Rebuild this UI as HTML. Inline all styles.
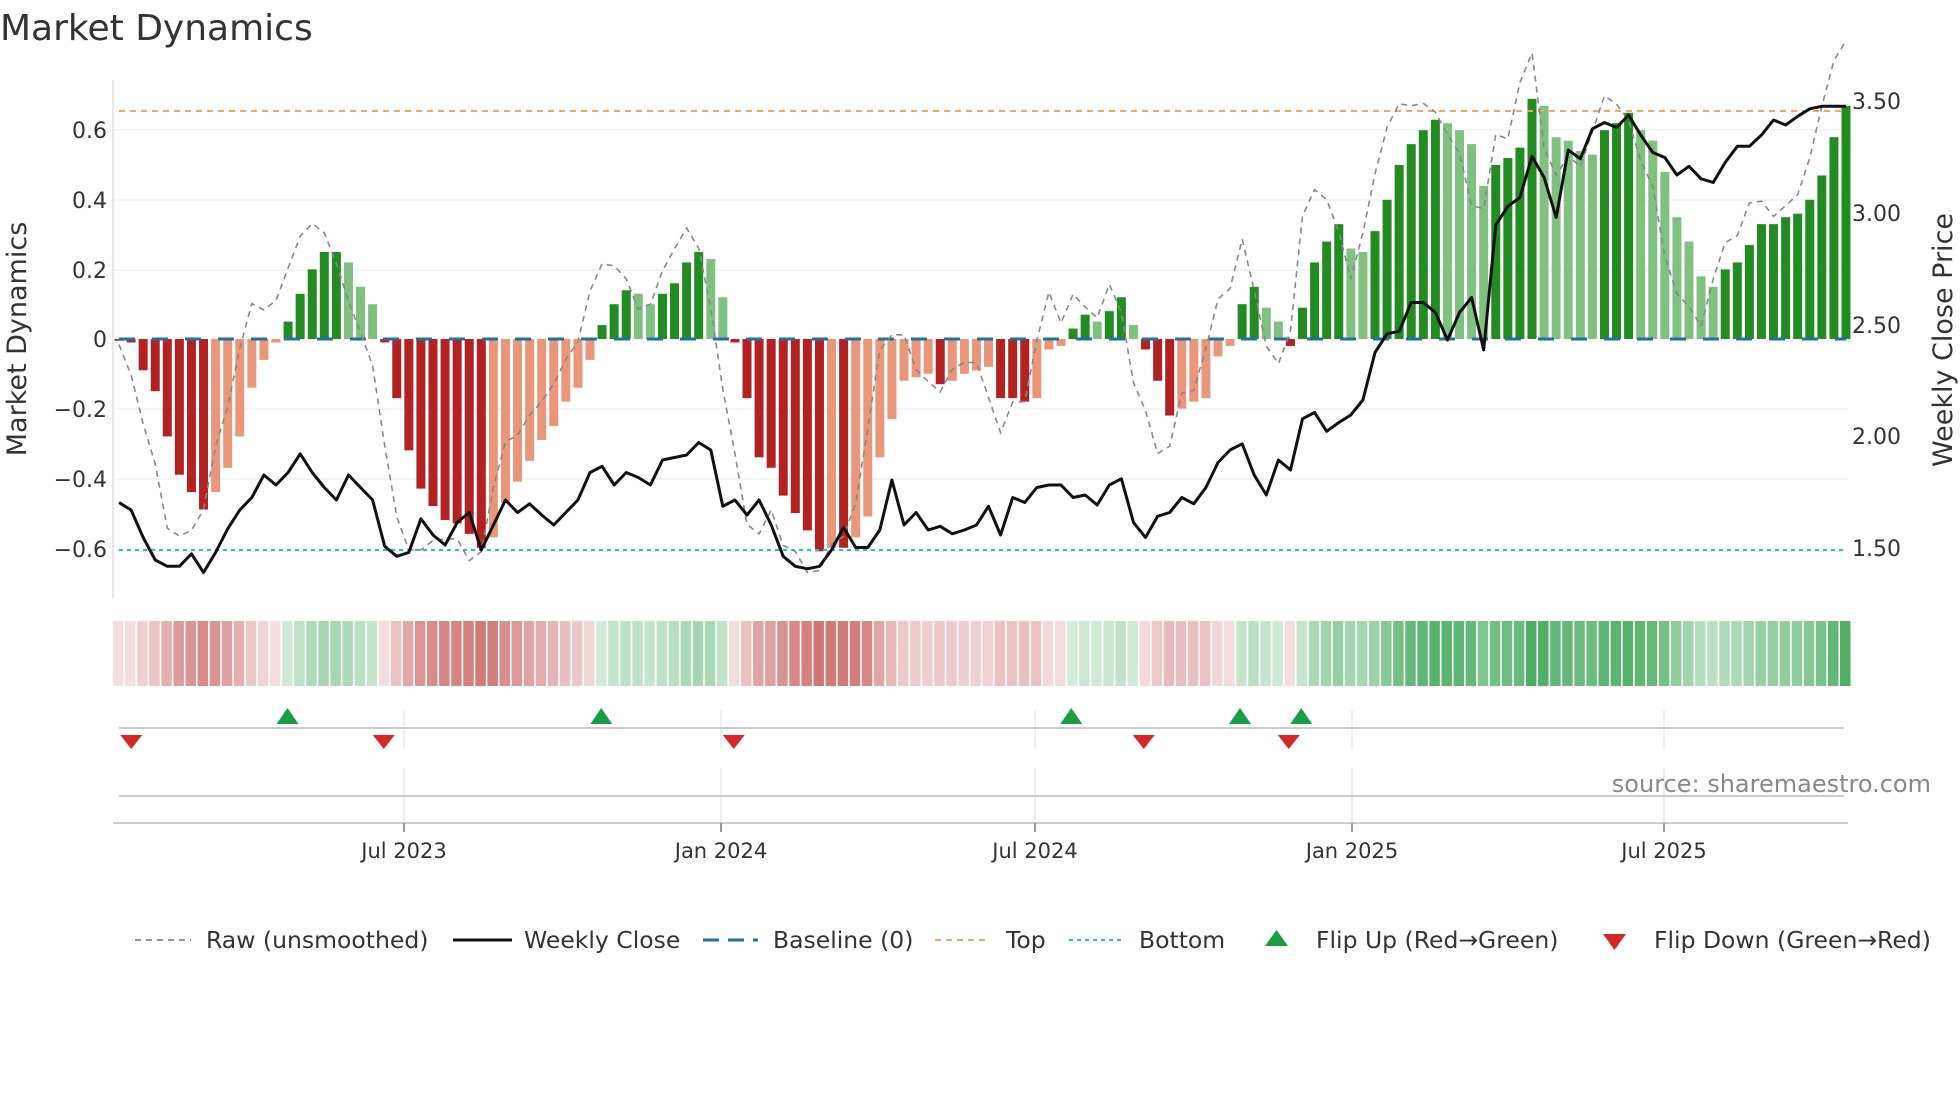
<!DOCTYPE html>
<html><head><meta charset="utf-8">
<style>
html,body{margin:0;padding:0;background:#fff;}
body{width:1960px;height:1102px;overflow:hidden;font-family:"DejaVu Sans","Liberation Sans",sans-serif;}
svg text{font-family:"DejaVu Sans","Liberation Sans",sans-serif;}
</style></head><body>
<svg id="s" width="1960" height="1102" viewBox="0 0 1960 1102" xmlns="http://www.w3.org/2000/svg">
<text x="0" y="40" font-size="36" fill="#333">Market Dynamics</text>
<g id="grid"></g>
<line x1="113" y1="80" x2="113" y2="598" stroke="#ddd" stroke-width="1.5"/>
<g font-size="22" fill="#333" text-anchor="end">
<text x="107" y="138">0.6</text><text x="107" y="208">0.4</text><text x="107" y="278">0.2</text>
<text x="107" y="347">0</text><text x="107" y="417">−0.2</text><text x="107" y="487">−0.4</text><text x="107" y="557">−0.6</text>
</g>
<g font-size="22" fill="#333">
<text x="1852" y="109">3.50</text><text x="1852" y="221">3.00</text><text x="1852" y="333">2.50</text>
<text x="1852" y="444">2.00</text><text x="1852" y="556">1.50</text>
</g>
<text transform="translate(26,339) rotate(-90)" font-size="27" fill="#333" text-anchor="middle">Market Dynamics</text>
<text transform="translate(1952,340) rotate(-90)" font-size="27" fill="#333" text-anchor="middle">Weekly Close Price</text>
<g id="bars"></g>
<line x1="119" y1="111" x2="1846" y2="111" stroke="#f4a460" stroke-width="2" stroke-dasharray="6,5"/>
<line x1="119" y1="550" x2="1846" y2="550" stroke="#20c0d0" stroke-width="2" stroke-dasharray="4,4"/>
<line x1="119" y1="339" x2="1846" y2="339" stroke="#1f6fa8" stroke-width="3" stroke-dasharray="16,17"/>
<polyline id="raw" fill="none" stroke="#888" stroke-width="1.6" stroke-dasharray="6,5"/>
<polyline id="price" fill="none" stroke="#111" stroke-width="3" stroke-linejoin="round"/>
<g id="heat"></g>
<g stroke="#e6e8ee" stroke-width="1.5">
<line x1="404" y1="710" x2="404" y2="748"/><line x1="721" y1="710" x2="721" y2="748"/><line x1="1035" y1="710" x2="1035" y2="748"/><line x1="1352" y1="710" x2="1352" y2="748"/><line x1="1664" y1="710" x2="1664" y2="748"/>
<line x1="404" y1="768" x2="404" y2="822"/><line x1="721" y1="768" x2="721" y2="822"/><line x1="1035" y1="768" x2="1035" y2="822"/><line x1="1352" y1="768" x2="1352" y2="822"/><line x1="1664" y1="768" x2="1664" y2="822"/>
</g>
<line x1="119" y1="728" x2="1844" y2="728" stroke="#ccc" stroke-width="2"/>
<line x1="119" y1="796" x2="1844" y2="796" stroke="#ccc" stroke-width="2"/>
<line x1="113" y1="823" x2="1848" y2="823" stroke="#ccc" stroke-width="2"/>
<g stroke="#999" stroke-width="2">
<line x1="404" y1="823" x2="404" y2="832"/><line x1="721" y1="823" x2="721" y2="832"/><line x1="1035" y1="823" x2="1035" y2="832"/><line x1="1352" y1="823" x2="1352" y2="832"/><line x1="1664" y1="823" x2="1664" y2="832"/>
</g>
<g id="flips"></g>
<text x="1931" y="792" font-size="24" fill="#888" text-anchor="end">source: sharemaestro.com</text>
<g font-size="21" fill="#333" text-anchor="middle">
<text x="404" y="858">Jul 2023</text><text x="721" y="858">Jan 2024</text><text x="1035" y="858">Jul 2024</text><text x="1352" y="858">Jan 2025</text><text x="1664" y="858">Jul 2025</text>
</g>
<g font-size="23.5" fill="#333">
<line x1="135" y1="940" x2="191" y2="940" stroke="#888" stroke-width="1.8" stroke-dasharray="6,5"/>
<text x="206" y="948">Raw (unsmoothed)</text>
<line x1="453" y1="940" x2="512" y2="940" stroke="#111" stroke-width="3"/>
<text x="524" y="948">Weekly Close</text>
<line x1="703" y1="940" x2="758" y2="940" stroke="#1f6fa8" stroke-width="3" stroke-dasharray="16,9"/>
<text x="773" y="948">Baseline (0)</text>
<line x1="935" y1="940" x2="990" y2="940" stroke="#f4a460" stroke-width="2" stroke-dasharray="6,5"/>
<text x="1006" y="948">Top</text>
<line x1="1069" y1="940" x2="1124" y2="940" stroke="#20c0d0" stroke-width="2" stroke-dasharray="4,4"/>
<text x="1139" y="948">Bottom</text>
<polygon points="1265,946 1288,946 1276.5,930" fill="#1a9e45"/>
<text x="1316" y="948">Flip Up (Red→Green)</text>
<polygon points="1603,934 1626,934 1614.5,950" fill="#d62728"/>
<text x="1654" y="948">Flip Down (Green→Red)</text>
</g>
</svg>
<script>
var v=[-0.005,-0.01,-0.09,-0.15,-0.28,-0.39,-0.44,-0.49,-0.44,-0.37,-0.28,-0.14,-0.06,-0.01,0.05,0.13,0.20,0.25,0.25,0.22,0.15,0.10,-0.01,-0.17,-0.32,-0.43,-0.48,-0.52,-0.53,-0.56,-0.60,-0.57,-0.47,-0.41,-0.35,-0.29,-0.25,-0.18,-0.14,-0.06,0.04,0.10,0.14,0.13,0.10,0.13,0.16,0.22,0.25,0.23,0.12,-0.01,-0.17,-0.34,-0.37,-0.45,-0.50,-0.55,-0.61,-0.60,-0.60,-0.57,-0.51,-0.34,-0.23,-0.12,-0.11,-0.10,-0.13,-0.12,-0.10,-0.09,-0.08,-0.17,-0.17,-0.18,-0.17,-0.03,-0.02,0.03,0.07,0.05,0.08,0.12,0.04,-0.03,-0.12,-0.22,-0.20,-0.18,-0.17,-0.05,-0.02,0.10,0.15,0.09,0.05,-0.02,0.09,0.22,0.28,0.33,0.26,0.25,0.31,0.40,0.50,0.56,0.60,0.63,0.62,0.60,0.56,0.44,0.50,0.52,0.55,0.69,0.67,0.58,0.57,0.54,0.53,0.60,0.62,0.65,0.60,0.57,0.48,0.35,0.28,0.18,0.15,0.20,0.22,0.27,0.33,0.33,0.35,0.36,0.40,0.47,0.58,0.67];
var p=[402,408,430,448,453,453,443,458,442,423,408,398,380,388,378,363,378,390,400,380,390,400,437,445,442,415,428,436,418,410,440,420,400,410,403,412,420,410,400,378,373,388,378,382,388,368,366,364,354,360,405,400,412,400,420,445,453,455,453,440,422,438,438,424,384,420,410,424,421,427,424,420,405,428,398,402,390,388,388,398,396,404,388,383,418,430,413,410,398,403,390,370,360,355,380,396,368,376,335,330,345,338,332,320,282,267,265,242,242,250,272,250,238,280,180,165,158,125,142,174,120,127,103,98,102,92,108,122,126,140,133,143,146,130,117,117,108,96,100,93,87,85,85,85];
var NS="http://www.w3.org/2000/svg";
function el(t,a,par){var e=document.createElementNS(NS,t);for(var k in a)e.setAttribute(k,a[k]);document.getElementById(par).appendChild(e);return e;}
var x0=119,dx=(1846-119)/143,Y0=339,K=348;
[130,200,270,409,479].forEach(function(y){el('line',{x1:113,x2:1848,y1:y,y2:y,stroke:'#eef0f4','stroke-width':1.5},'grid');});
var rp=[],pp=[];
for(var i=0;i<v.length;i++){
 var x=x0+i*dx,val=v[i],prev=i>0?v[i-1]:0;
 var dark=Math.abs(val)>=Math.abs(prev)||(val*prev<=0);
 var c=val>=0?(dark?'#228b22':'#80c080'):(dark?'#b22222':'#e9967a');
 var y=Y0-val*K;
 el('rect',{x:x-4.5,y:Math.min(y,Y0),width:9,height:Math.max(Math.abs(Y0-y),1.5),fill:c},'bars');
 var nx=i<v.length-1?v[i+1]:val+0.08;
 var r=val+1.1*(nx-prev);
 rp.push(x.toFixed(1)+','+(Y0-r*K).toFixed(1));
 pp.push(x.toFixed(1)+','+(p[i]*1.25).toFixed(1));
 var t=Math.min(Math.abs(val)/0.7,1);t=0.2+0.75*t;
 var base=val>=0?[65,168,90]:[200,95,95];
 var col='rgb('+base.map(function(b){return Math.round(255-(255-b)*t);}).join(',')+')';
 el('rect',{x:x-6,y:621,width:10.5,height:65,fill:col},'heat');
}
document.getElementById('raw').setAttribute('points',rp.join(' '));
document.getElementById('price').setAttribute('points',pp.join(' '));
[230,481,857,992,1041].forEach(function(d){var x=d*1.25;el('polygon',{points:(x-11)+',724 '+(x+11)+',724 '+x+',708',fill:'#1a9e45'},'flips');});
[105,307,587,915,1031].forEach(function(d){var x=d*1.25;el('polygon',{points:(x-11)+',735 '+(x+11)+',735 '+x+',749',fill:'#d62728'},'flips');});
</script>
</body></html>
